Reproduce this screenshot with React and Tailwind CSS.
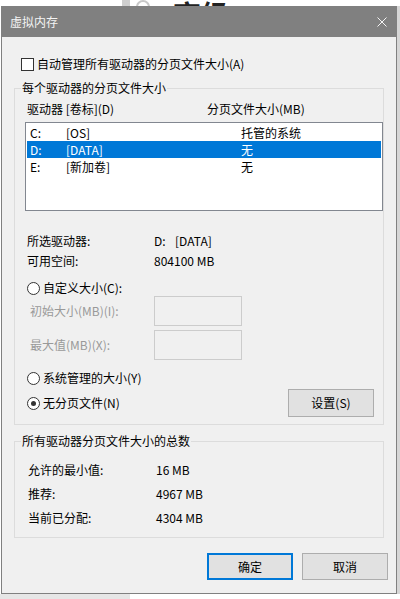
import React from 'react';

const drives = [
  { letter: 'C:', label: '[OS]', size: '托管的系统' },
  { letter: 'D:', label: '[DATA]', size: '无', selected: true },
  { letter: 'E:', label: '[新加卷]', size: '无' },
];

function GroupBox({ title, className = '', children }) {
  return (
    <div className={`relative mx-[12px] border border-[#dcdcdc] ${className}`}>
      <span className="absolute -top-[9px] left-[6px] bg-[#f0f0f0] px-[1px] leading-[16px]">{title}</span>
      {children}
    </div>
  );
}

function Radio({ checked }) {
  return (
    <span className="flex h-[13px] w-[13px] items-center justify-center rounded-full border border-[#333] bg-white">
      {checked ? <span className="h-[5px] w-[5px] rounded-full bg-[#333]" /> : null}
    </span>
  );
}

function Button({ children, primary }) {
  return (
    <div
      className={`flex h-[27px] w-[86px] items-center justify-center bg-[#e1e1e1] ${
        primary ? 'border-2 border-[#0078d7]' : 'border border-[#adadad]'
      }`}
    >
      {children}
    </div>
  );
}

export default function App() {
  return (
    <div className="flex h-[599px] w-[400px] flex-col overflow-hidden bg-white font-['Noto_Sans_CJK_SC','Noto_Sans',sans-serif] text-[12px] leading-[16px] text-black">
      <div className="flex h-[6px] shrink-0 items-end overflow-hidden">
        <span className="ml-[122px] h-[6px] w-[8px] bg-[#cfcfcf]" />
        <span className="ml-[6px] -mb-[8px] h-[14px] w-[14px] rounded-full border-2 border-[#c8c8c8]" />
        <span className="ml-[23px] -mb-[22px] text-[28px] font-bold leading-[28px] text-[#222]">高级</span>
      </div>

      <div className="flex shrink-0">
        <div className="ml-[1px] w-[396px] border-x border-b border-[#808080] bg-[#f0f0f0]">
          <div className="flex h-[31px] items-center justify-between bg-[#808080] pl-[8px] pr-[9px] text-[#f4f4f4]">
            <span>虚拟内存</span>
            <svg width="10" height="10" viewBox="0 0 10 10" stroke="#f4f4f4" strokeWidth="1">
              <path d="M0.5 0.5 L9.5 9.5 M9.5 0.5 L0.5 9.5" />
            </svg>
          </div>

          <div className="ml-[19px] mt-[19px] flex h-[16px] items-center gap-[3px]">
            <span className="h-[13px] w-[13px] border border-[#333] bg-white" />
            <span>自动管理所有驱动器的分页文件大小(A)</span>
          </div>

          <GroupBox title="每个驱动器的分页文件大小" className="mt-[16px] pb-[7px]">
            <div className="flex pl-[12px] pt-[12px]">
              <span className="w-[180px]">驱动器 [卷标](D)</span>
              <span>分页文件大小(MB)</span>
            </div>
            <div className="ml-[10px] mt-[5px] h-[89px] w-[358px] border border-[#828790] bg-white p-[1px]">
              {drives.map((d) => (
                <div
                  key={d.letter}
                  className={`flex h-[17px] items-center pl-[3px] ${d.selected ? 'bg-[#0078d7] text-white' : ''}`}
                >
                  <span className="w-[36px]">{d.letter}</span>
                  <span className="w-[175px]">{d.label}</span>
                  <span>{d.size}</span>
                </div>
              ))}
            </div>

            <div className="mt-[22px] flex pl-[12px]">
              <span className="w-[127px]">所选驱动器:</span>
              <span className="w-[21px]">D:</span>
              <span>[DATA]</span>
            </div>
            <div className="mt-[4px] flex pl-[12px]">
              <span className="w-[127px]">可用空间:</span>
              <span>804100 MB</span>
            </div>

            <div className="mt-[11px] flex h-[16px] items-center gap-[3px] pl-[12px]">
              <Radio />
              <span>自定义大小(C):</span>
            </div>
            <div className="flex h-[30px] items-center pl-[15px] text-[#999]">
              <span className="w-[124px]">初始大小(MB)(I):</span>
              <span className="h-[30px] w-[88px] border border-[#cccccc] bg-[#f0f0f0]" />
            </div>
            <div className="mt-[4px] flex h-[30px] items-center pl-[15px] text-[#999]">
              <span className="w-[124px]">最大值(MB)(X):</span>
              <span className="h-[30px] w-[88px] border border-[#cccccc] bg-[#f0f0f0]" />
            </div>

            <div className="mt-[10px] flex h-[16px] items-center gap-[3px] pl-[12px]">
              <Radio />
              <span>系统管理的大小(Y)</span>
            </div>
            <div className="mt-[3px] flex h-[28px] items-center justify-between pl-[12px] pr-[9px]">
              <div className="flex items-center gap-[3px]">
                <Radio checked />
                <span>无分页文件(N)</span>
              </div>
              <div className="flex h-[28px] w-[86px] items-center justify-center border border-[#adadad] bg-[#e1e1e1]">
                设置(S)
              </div>
            </div>
          </GroupBox>

          <GroupBox title="所有驱动器分页文件大小的总数" className="mt-[16px] pb-[11px] pt-[20px]">
            <div className="flex pl-[13px]">
              <span className="w-[128px]">允许的最小值:</span>
              <span>16 MB</span>
            </div>
            <div className="mt-[8px] flex pl-[13px]">
              <span className="w-[128px]">推荐:</span>
              <span>4967 MB</span>
            </div>
            <div className="mt-[8px] flex pl-[13px]">
              <span className="w-[128px]">当前已分配:</span>
              <span>4304 MB</span>
            </div>
          </GroupBox>

          <div className="mt-[15px] flex justify-end gap-[9px] pb-[13px] pr-[8px]">
            <Button primary>确定</Button>
            <Button>取消</Button>
          </div>
        </div>
        <div className="flex-1 bg-[#d6d6d6]" />
      </div>

      <div className="flex flex-1">
        <div className="w-[130px] bg-[#e6e6e6]" />
      </div>
    </div>
  );
}
